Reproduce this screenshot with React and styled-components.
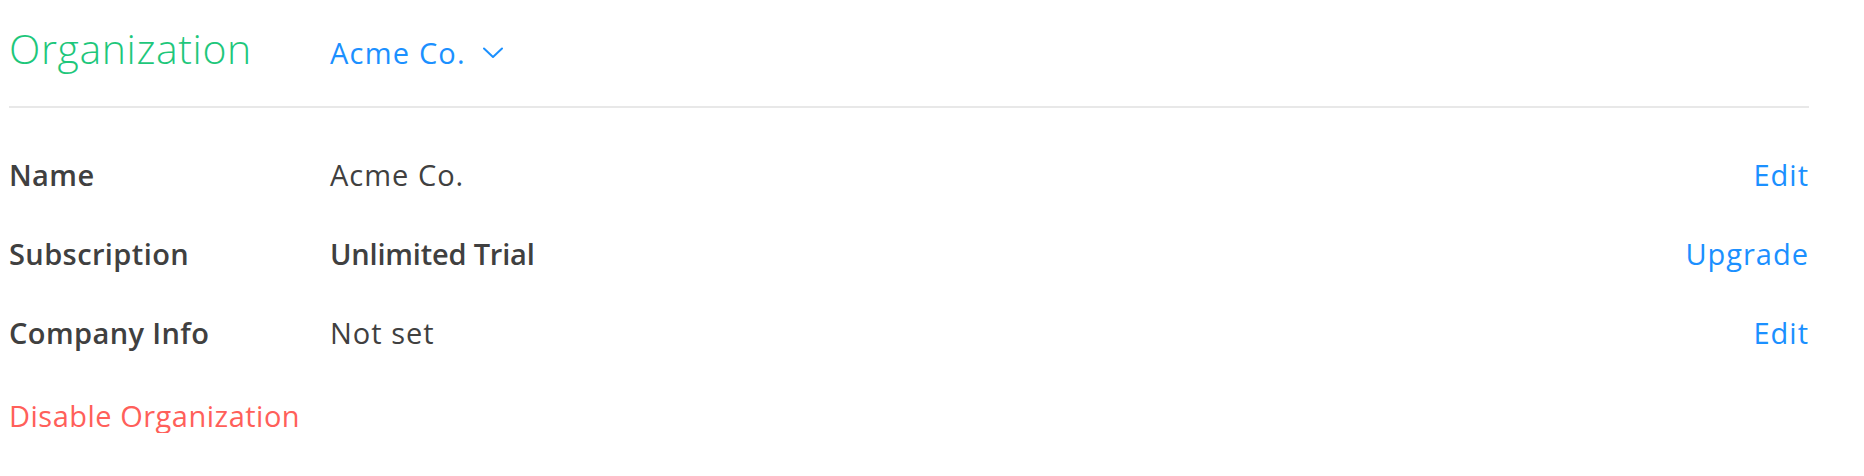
import React from "react";
import styled, { createGlobalStyle } from "styled-components";

const Global = createGlobalStyle`
  html, body { margin: 0; padding: 0; background: #ffffff; }
  body { font-family: "Open Sans", Lato, sans-serif; color: #404040; }
`;

const Page = styled.div`
  width: 1800px;
  padding: 24px 0 0 9px;
`;

const Header = styled.div`
  display: grid;
  grid-template-columns: 321px 1fr;
  align-items: baseline;
  padding-bottom: 34px;
  border-bottom: 2px solid #e8e8e8;
`;

const Title = styled.h1`
  margin: 0;
  font-size: 41px;
  line-height: 48px;
  font-weight: 300;
  letter-spacing: 0.6px;
  color: #1ec77b;
`;

const OrgPicker = styled.button`
  display: inline-flex;
  align-items: center;
  gap: 17px;
  justify-self: start;
  padding: 0;
  border: 0;
  background: none;
  font-family: inherit;
  font-size: 29px;
  line-height: 34px;
  letter-spacing: 1.2px;
  color: #1b90ff;
  cursor: pointer;
`;

const Rows = styled.div`
  padding-top: 50px;
`;

const Row = styled.div`
  display: grid;
  grid-template-columns: 321px 1fr auto;
  height: 79px;
  font-size: 29px;
  line-height: 34px;
`;

const Label = styled.div`
  font-weight: 600;
  letter-spacing: 0.4px;
  color: #404040;
`;

const Value = styled.div`
  font-weight: ${(p) => (p.$strong ? 600 : 400)};
  letter-spacing: ${(p) => (p.$strong ? "-0.2px" : "1px")};
  color: #404040;
`;

const Action = styled.a`
  color: #1b90ff;
  letter-spacing: 1px;
  text-decoration: none;
  cursor: pointer;
`;

const Danger = styled.a`
  display: inline-block;
  margin-top: 4px;
  font-size: 29px;
  line-height: 34px;
  letter-spacing: 0.5px;
  color: #ff5f5a;
  text-decoration: none;
  cursor: pointer;
`;

const Chevron = () => (
  <svg width="20" height="12" viewBox="0 0 20 12" fill="none">
    <path d="M1 1.5 L10 10 L19 1.5" stroke="#1b90ff" strokeWidth="2" strokeLinecap="round" strokeLinejoin="round" />
  </svg>
);

const rows = [
  { label: "Name", value: "Acme Co.", action: "Edit" },
  { label: "Subscription", value: "Unlimited Trial", strong: true, action: "Upgrade" },
  { label: "Company Info", value: "Not set", action: "Edit" },
];

export default function App() {
  return (
    <>
      <Global />
      <Page>
        <Header>
          <Title>Organization</Title>
          <OrgPicker>
            Acme Co.
            <Chevron />
          </OrgPicker>
        </Header>
        <Rows>
          {rows.map((r) => (
            <Row key={r.label}>
              <Label>{r.label}</Label>
              <Value $strong={r.strong}>{r.value}</Value>
              <Action>{r.action}</Action>
            </Row>
          ))}
        </Rows>
        <Danger>Disable Organization</Danger>
      </Page>
    </>
  );
}
